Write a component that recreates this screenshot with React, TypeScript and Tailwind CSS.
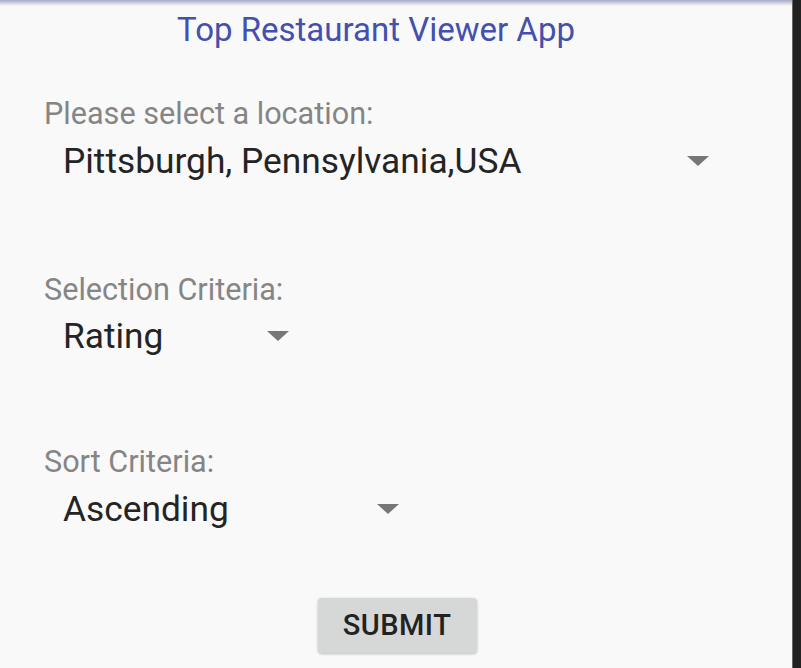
const font = { fontFamily: 'Roboto, "Noto Sans", sans-serif' }

function Arrow() {
  return (
    <svg width="22" height="10" viewBox="0 0 22 10" className="shrink-0">
      <path d="M0 0 L22 0 L11 10 Z" fill="#777" />
    </svg>
  )
}

function Spinner({ label, value, width, top, gap }: { label: string; value: string; width: string; top: string; gap: string }) {
  return (
    <div className={top}>
      <p className="text-[30.6px] leading-[36px] text-[#858585]">{label}</p>
      <div className={`flex h-[46px] items-center justify-between pl-[19px] pr-[14px] ${gap} ${width}`}>
        <span className="text-[35.3px] leading-[46px] text-[#242424]">{value}</span>
        <Arrow />
      </div>
    </div>
  )
}

export default function App() {
  return (
    <div className="flex h-[668px] w-full overflow-hidden" style={font}>
      <div className="flex w-[792px] flex-col bg-[#f9f9f9]">
        <div className="h-[6px] bg-gradient-to-b from-[#a7abc6] to-[#f9f9f9]" />
        <h1 className="mt-[4px] pr-[40px] text-center text-[33px] leading-[40px] text-[#4350ad]">
          Top Restaurant Viewer App
        </h1>
        <div className="flex flex-col pl-[44px]">
          <Spinner label="Please select a location:" value="Pittsburgh, Pennsylvania,USA" width="w-[679px]" top="mt-[46px]" gap="mt-[6px]" />
          <Spinner label="Selection Criteria:" value="Rating" width="w-[259px]" top="mt-[88px]" gap="mt-[5px]" />
          <Spinner label="Sort Criteria:" value="Ascending" width="w-[369px]" top="mt-[85px]" gap="mt-[6px]" />
        </div>
        <div className="mt-[66px] flex justify-center">
          <button className="ml-[2px] h-[55px] w-[159px] rounded-[4px] bg-[#d6d7d7] text-[29px] font-medium tracking-[0.5px] text-[#222] shadow-[0_1px_3px_rgba(0,0,0,0.25)]">
            SUBMIT
          </button>
        </div>
      </div>
      <div className="flex-1 border-l border-[#666] bg-[#222]" />
    </div>
  )
}
